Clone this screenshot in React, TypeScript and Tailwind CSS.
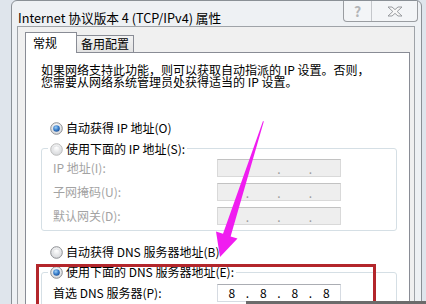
import React from "react";

const FONT = { fontFamily: '"Noto Sans CJK SC", "Noto Sans", sans-serif' };

function Radio({ checked, faded }: { checked?: boolean; faded?: boolean }) {
  return (
    <svg width="13" height="13" viewBox="0 0 13 13" className="shrink-0">
      <defs>
        <radialGradient id="rbg" cx="50%" cy="35%" r="65%">
          <stop offset="0%" stopColor="#ffffff" />
          <stop offset="100%" stopColor="#d4d6d9" />
        </radialGradient>
        <radialGradient id="rdot" cx="40%" cy="35%" r="70%">
          <stop offset="0%" stopColor="#9fd0f5" />
          <stop offset="55%" stopColor="#3a7fcc" />
          <stop offset="100%" stopColor="#1d4f94" />
        </radialGradient>
      </defs>
      <circle
        cx="6.5"
        cy="6.5"
        r="5.8"
        fill="url(#rbg)"
        stroke={faded ? "#bcbcbc" : "#8d8f93"}
        strokeWidth="1"
      />
      {checked ? (
        <circle cx="6.5" cy="6.5" r="3.3" fill="url(#rdot)" />
      ) : (
        <circle cx="6.5" cy="6.5" r="3.6" fill="none" stroke="#e3e4e6" strokeWidth="1" />
      )}
    </svg>
  );
}

function IpBox({ values, disabled }: { values?: string[]; disabled?: boolean }) {
  const segs = values ?? ["", "", "", ""];
  return (
    <div
      className={
        disabled
          ? "flex h-[18px] w-[124px] items-end border border-[#d9d9d9] border-t-[#c2c2c2] bg-[#eeeeee] text-[#9a9a9a]"
          : "flex h-[18px] w-[124px] items-center border border-[#d6dbe2] border-t-[#abadb3] bg-white text-black"
      }
    >
      {segs.map((v, i) => (
        <React.Fragment key={i}>
          <span className="flex w-[28px] justify-center text-[12px] leading-[14px]">{v}</span>
          {i < 3 && <span className="flex w-[4px] justify-center text-[12px] leading-[14px]">.</span>}
        </React.Fragment>
      ))}
    </div>
  );
}

function Field({ label, disabled, values }: { label: string; disabled?: boolean; values?: string[] }) {
  return (
    <div className="flex h-[18px] items-center">
      <span
        className={
          "w-[175px] pl-[11px] text-[12px] leading-[12px] " +
          (disabled ? "text-[#a3a3a3]" : "text-black")
        }
      >
        {label}
      </span>
      <IpBox disabled={disabled} values={values} />
    </div>
  );
}

export default function App() {
  return (
    <div
      className="relative h-[304px] w-[426px] overflow-hidden bg-[#dfe5ec] pl-[11px]"
      style={FONT}
    >
      {/* window */}
      <div className="flex h-[310px] w-[411px] flex-col rounded-t-[6px] border border-[#8a9096] bg-[#eef1f4]">
        {/* title bar */}
        <div className="flex h-[31px] justify-between">
          <span className="pl-[6px] pt-[9px] text-[12.7px] leading-[16px] text-black">
            Internet 协议版本 4 (TCP/IPv4) 属性
          </span>
          <div className="mr-[3px] flex h-[21px] w-[75px] rounded-b-[4px] border border-t-0 border-[#9a9da1] bg-[#f3f5f7]">
            <div className="flex w-[28px] items-center justify-center border-r border-[#c4c7cb] text-[14px] font-bold leading-none text-[#b3b5b8]">
              ?
            </div>
            <div className="flex flex-1 items-center justify-center">
              <svg width="16" height="11" viewBox="0 0 16 11">
                <polygon
                  points="1,1 5,1 8,3.6 11,1 15,1 10.2,5.5 15,10 11,10 8,7.4 5,10 1,10 5.8,5.5"
                  fill="#f7f7f7"
                  stroke="#8f9296"
                  strokeWidth="0.9"
                  strokeLinejoin="round"
                />
              </svg>
            </div>
          </div>
        </div>

        {/* client area */}
        <div className="ml-[5px] mr-[6px] flex flex-1 flex-col border border-[#9fa3a8] bg-[#f0f0f0] pl-[7px] pr-[4px] pt-[5px]">
          {/* tabs */}
          <div className="flex h-[20px] items-end">
            <div className="relative z-10 -mb-[1px] flex h-[21px] w-[52px] items-center border border-b-0 border-[#898c95] bg-white pl-[7px] text-[12px] leading-[12px] text-black">
              常规
            </div>
            <div className="flex h-[17px] w-[57px] items-center justify-center border border-b-0 border-l-0 border-[#898c95] bg-gradient-to-b from-[#f3f3f3] to-[#e3e3e3] text-[12px] leading-[12px] text-black">
              备用配置
            </div>
          </div>

          {/* tab page */}
          <div className="flex flex-1 flex-col border border-[#898c95] bg-white pl-[15px] pr-[12px] pt-[11px] text-[12px] leading-[12px] text-black">
            <p>
              如果网络支持此功能，则可以获取自动指派的 IP 设置。否则，
              <br />
              您需要从网络系统管理员处获得适当的 IP 设置。
            </p>

            <div className="ml-[9px] mt-[32px] flex h-[16px] items-center gap-[3px]">
              <Radio checked />
              <span>自动获得 IP 地址(O)</span>
            </div>

            <div className="mt-[12px] rounded-[3px] border border-[#d5dfe5] pb-[5px]">
              <div className="-mt-[8px] ml-[6px] flex h-[16px] w-fit items-center gap-[3px] bg-white px-[2px]">
                <Radio faded />
                <span>使用下面的 IP 地址(S):</span>
              </div>
              <div className="mt-[2px] flex flex-col gap-[6px]">
                <Field label="IP 地址(I):" disabled />
                <Field label="子网掩码(U):" disabled />
                <Field label="默认网关(D):" disabled />
              </div>
            </div>

            <div className="ml-[9px] mt-[13px] flex h-[16px] items-center gap-[3px]">
              <Radio />
              <span>自动获得 DNS 服务器地址(B)</span>
            </div>

            <div className="mt-[12px] rounded-[3px] border border-[#d5dfe5] pb-[5px]">
              <div className="-mt-[9px] ml-[6px] flex h-[16px] w-fit items-center gap-[3px] bg-white px-[2px]">
                <Radio checked />
                <span>使用下面的 DNS 服务器地址(E):</span>
              </div>
              <div className="mt-[4px] flex flex-col gap-[6px]">
                <Field label="首选 DNS 服务器(P):" values={["8", "8", "8", "8"]} />
              </div>
            </div>
          </div>
        </div>
      </div>

      {/* red highlight box */}
      <div className="absolute left-[36px] top-[264px] h-[60px] w-[340px] border-[3px] border-[#b3262b]" />

      {/* dark strip at bottom */}
      <div className="absolute bottom-0 left-[246px] right-0 h-[3px] bg-[#6b6b6b]" />

      {/* magenta arrow */}
      <svg className="pointer-events-none absolute left-0 top-0" width="426" height="304" viewBox="0 0 426 304">
        <polygon
          points="263,121 263.8,121.6 230.6,236.4 237.5,238.6 220,257 216,231.5 223,233.8"
          fill="#f01df0"
        />
      </svg>
    </div>
  );
}
